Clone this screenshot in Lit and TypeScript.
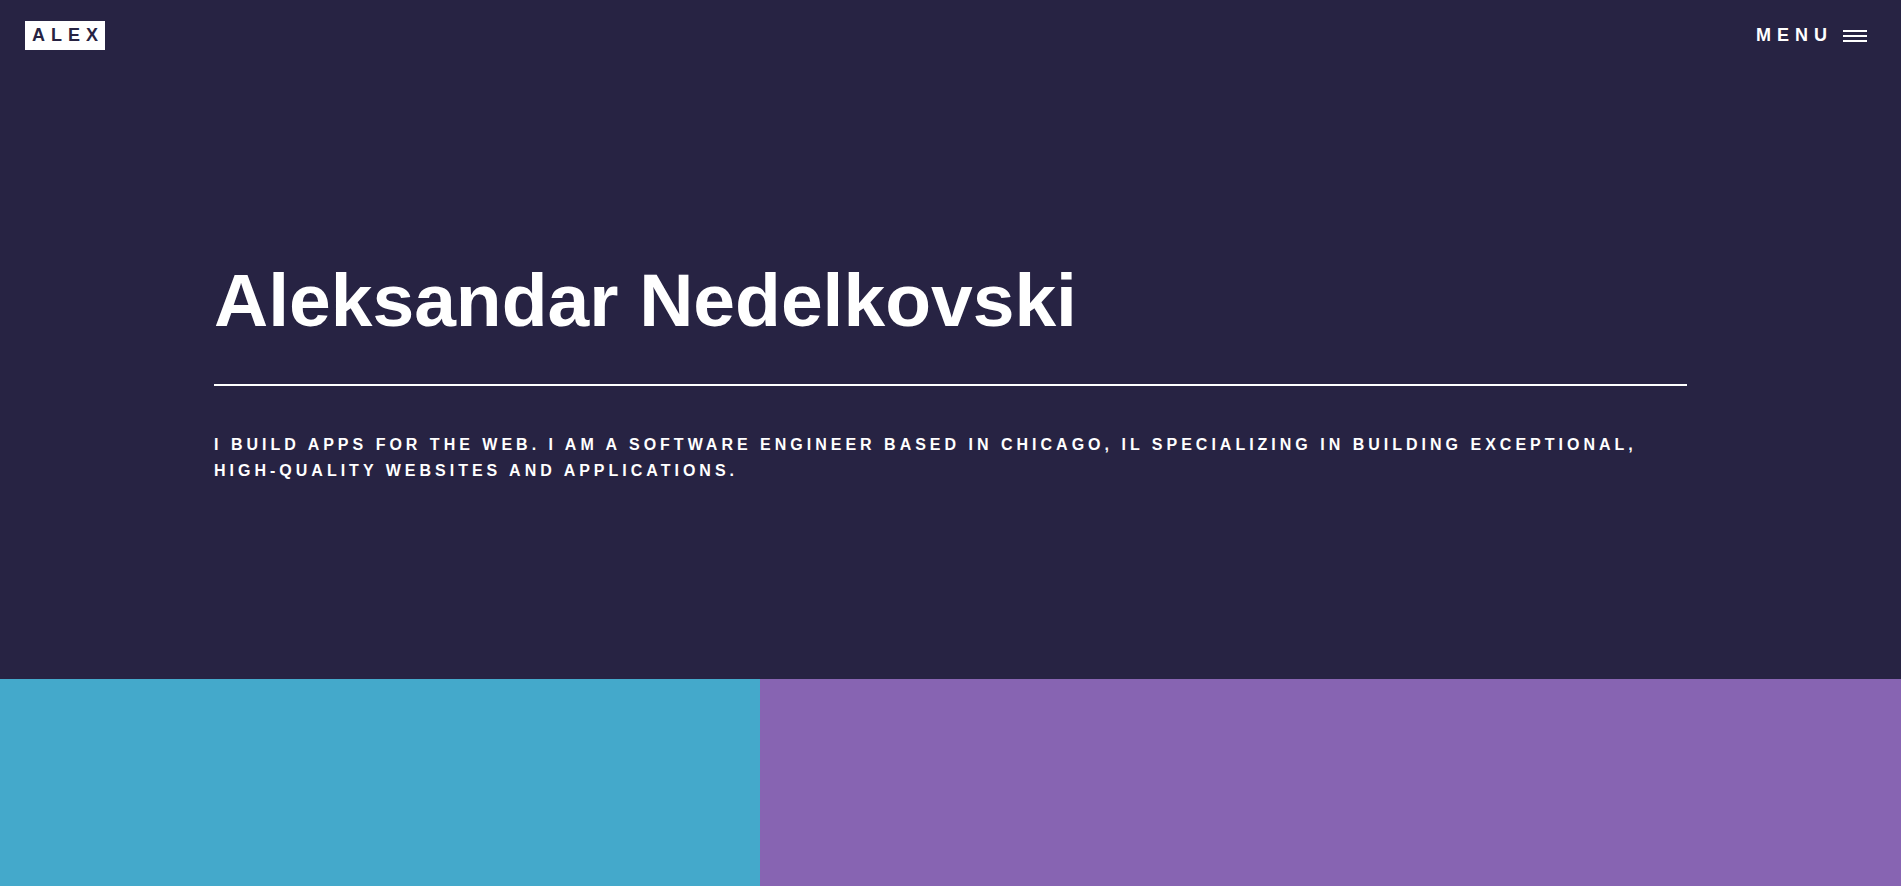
import { LitElement, html, css } from "lit";
import { customElement } from "lit/decorators.js";

@customElement("app-root")
export class AppRoot extends LitElement {
  static styles = css`
    :host {
      display: flex;
      flex-direction: column;
      min-height: 100vh;
      background: #272343;
      color: #fff;
      font: 700 16px/26px "Liberation Sans", Arial, sans-serif;
    }
    * {
      box-sizing: border-box;
    }
    .bar {
      display: flex;
      align-items: center;
      justify-content: space-between;
      padding: 21px 34px 21px 25px;
      text-transform: uppercase;
      font-size: 18px;
      line-height: 29px;
      letter-spacing: 6px;
    }
    .logo {
      background: #fff;
      color: #272343;
      padding: 0 1px 0 7px;
      text-decoration: none;
    }
    .menu {
      display: flex;
      align-items: center;
      gap: 10px;
      border: 0;
      padding: 0;
      background: none;
      color: inherit;
      font: inherit;
      letter-spacing: inherit;
      text-transform: inherit;
      cursor: pointer;
    }
    .menu svg {
      display: block;
    }
    .intro {
      padding: 183px 214px 195px;
    }
    h1 {
      margin: 0 0 46px;
      padding-bottom: 38px;
      border-bottom: 2px solid #fff;
      font-size: 75px;
      line-height: 92px;
    }
    p {
      margin: 0;
      text-transform: uppercase;
      letter-spacing: 4px;
    }
    .tiles {
      flex: 1;
      display: grid;
      grid-template-columns: 2fr 3fr;
    }
    .blue {
      background: #44a9cb;
    }
    .purple {
      background: #8764b2;
    }
  `;

  render() {
    return html`
      <header class="bar">
        <a class="logo" href="#">Alex</a>
        <button class="menu" type="button">
          Menu
          <svg width="24" height="13" viewBox="0 0 24 13" aria-hidden="true">
            <path d="M0 2h24M0 7h24M0 12h24" stroke="#fff" stroke-width="2" />
          </svg>
        </button>
      </header>
      <main class="intro">
        <h1>Aleksandar Nedelkovski</h1>
        <p>
          I build apps for the web. I am a software engineer based in Chicago,
          IL specializing in building exceptional, high-quality websites and
          applications.
        </p>
      </main>
      <section class="tiles">
        <div class="blue"></div>
        <div class="purple"></div>
      </section>
    `;
  }
}
